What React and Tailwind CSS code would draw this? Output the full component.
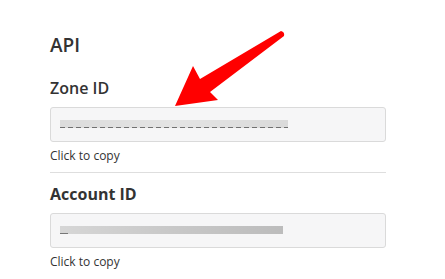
import React from "react";

function Redacted({ width, dashed, barClass }) {
  return (
    <div className="relative h-[10px]" style={{ width }}>
      <div className={"absolute left-0 top-0 h-[8px] w-full blur-[0.5px] " + barClass} />
      {dashed ? (
        <div className="absolute left-0 top-[7px] h-[1.5px] w-full bg-[repeating-linear-gradient(90deg,#555_0_5px,transparent_5px_8px)] opacity-80" />
      ) : (
        <div className="absolute left-0 top-[7px] h-[1.5px] w-[8px] bg-[#777]" />
      )}
    </div>
  );
}

function IdField({ label, width, dashed, barClass, labelClass }) {
  return (
    <div>
      <div className={"h-5 text-[16px] leading-5 text-[#333] " + labelClass}>{label}</div>
      <div className="mt-[9px] flex h-[35px] items-center rounded-[3px] border border-[#dadada] bg-[#f6f6f7] pl-[9px]">
        <Redacted width={width} dashed={dashed} barClass={barClass} />
      </div>
      <div className="mt-[6px] h-4 text-[12px] leading-4 text-[#333]">Click to copy</div>
    </div>
  );
}

export default function App() {
  return (
    <div
      className="relative h-[279px] w-[445px] overflow-hidden bg-white"
      style={{ fontFamily: '"Open Sans", "Noto Sans", sans-serif' }}
    >
      <div className="ml-[50px] w-[336px] pt-[33px]">
        <div className="h-6 text-[19px] leading-6 font-semibold text-[#333]">API</div>
        <div className="mt-[21px]">
          <IdField
            label="Zone ID"
            width={228}
            dashed
            barClass="bg-gradient-to-r from-[#dcdcdc] via-[#e4e4e4] to-[#dadada]"
            labelClass="font-semibold"
          />
        </div>
        <div className="mt-[8px] h-px bg-[#dedede]" />
        <div className="mt-[11px]">
          <IdField
            label="Account ID"
            width={223}
            dashed={false}
            barClass="bg-gradient-to-r from-[#d6d6d6] via-[#c8c8c8] to-[#bcbcbc]"
            labelClass="font-bold"
          />
        </div>
      </div>
      <svg
        className="pointer-events-none absolute left-0 top-0"
        width="445"
        height="279"
        viewBox="0 0 445 279"
      >
        <path
          d="M281 31 Q285 32 284 36 L210 92 L218 100 L175 106 L193 66 L200 79 Z"
          fill="#ff0000"
        />
      </svg>
    </div>
  );
}
